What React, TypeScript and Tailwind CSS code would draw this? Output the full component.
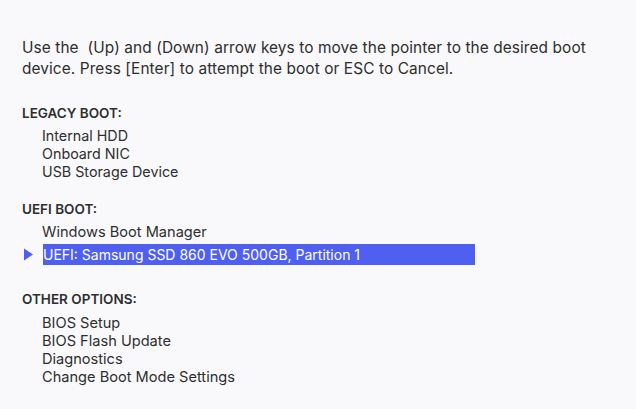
export default function App() {
  const font = { fontFamily: 'Inter, "Noto Sans", sans-serif' };
  return (
    <div className="w-[636px] h-[409px] bg-[#f9f9fb] text-[#2e2e2e] overflow-hidden" style={font}>
      <div className="pt-[37px] pl-[22px]">
        <p className="text-[15.4px] leading-[21px] tracking-[0.1px] whitespace-nowrap">
          Use the&nbsp; (Up) and (Down) arrow keys to move the pointer to the desired boot
          <br />
          device. Press [Enter] to attempt the boot or ESC to Cancel.
        </p>

        <div className="mt-[25px] flex flex-col">
          <div className="text-[13.5px] font-semibold leading-[18px]">LEGACY BOOT:</div>
          <div className="mt-[5px] pl-[20px] flex flex-col text-[14.3px] leading-[18px]">
            <div>Internal HDD</div>
            <div>Onboard NIC</div>
            <div>USB Storage Device</div>
          </div>
        </div>

        <div className="mt-[19px] flex flex-col">
          <div className="text-[13.5px] font-semibold leading-[18px]">UEFI BOOT:</div>
          <div className="mt-[5px] pl-[20px] flex flex-col text-[14.6px] leading-[18px]">
            <div>Windows Boot Manager</div>
          </div>
          <div className="mt-[3px] flex items-center h-[21px]">
            <svg width="21" height="21" viewBox="0 0 21 21" className="shrink-0">
              <polygon points="2,4.5 11,10.5 2,16.5" fill="#4f5ff0" />
            </svg>
            <div className="w-[432px] h-[21px] bg-[#4f5ff0] text-white text-[14px] leading-[21px]">
              UEFI: Samsung SSD 860 EVO 500GB, Partition 1
            </div>
          </div>
        </div>

        <div className="mt-[25px] flex flex-col">
          <div className="text-[13.5px] font-semibold leading-[18px]">OTHER OPTIONS:</div>
          <div className="mt-[6px] pl-[20px] flex flex-col text-[14.6px] leading-[18px]">
            <div>BIOS Setup</div>
            <div>BIOS Flash Update</div>
            <div>Diagnostics</div>
            <div>Change Boot Mode Settings</div>
          </div>
        </div>
      </div>
    </div>
  );
}
